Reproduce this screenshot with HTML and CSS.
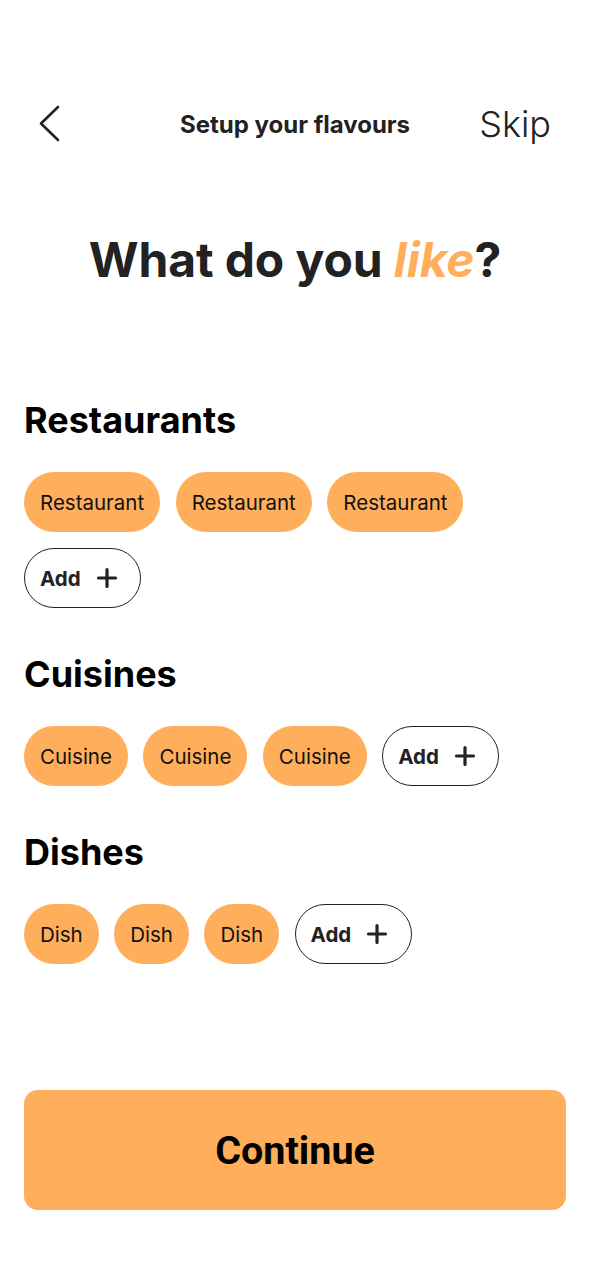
FILE: index.html
```html
<!DOCTYPE html>
<html lang="en">
<head>
<meta charset="utf-8">
<title>Setup your flavours</title>
<link rel="stylesheet" href="styles.css">
</head>
<body>
<div class="screen">
  <header class="topbar">
    <button class="back" aria-label="Back">
      <svg width="24" height="40" viewBox="0 0 24 40"><path d="M20 3 L3 19.5 L20 36" fill="none" stroke="#222" stroke-width="2.6" stroke-linecap="round" stroke-linejoin="round"/></svg>
    </button>
    <div class="title">Setup your flavours</div>
    <button class="skip">Skip</button>
  </header>

  <h1 class="headline">What do you <em>like</em>?</h1>

  <section class="group g-first">
    <h2 class="group-title">Restaurants</h2>
    <div class="chips">
      <span class="chip">Restaurant</span>
      <span class="chip">Restaurant</span>
      <span class="chip">Restaurant</span>
      <button class="add">Add <svg width="24" height="24" viewBox="0 0 24 24"><path d="M12 3.5v17M3.5 12h17" stroke="#222" stroke-width="3.2" stroke-linecap="round"/></svg></button>
    </div>
  </section>

  <section class="group">
    <h2 class="group-title">Cuisines</h2>
    <div class="chips">
      <span class="chip">Cuisine</span>
      <span class="chip">Cuisine</span>
      <span class="chip">Cuisine</span>
      <button class="add">Add <svg width="24" height="24" viewBox="0 0 24 24"><path d="M12 3.5v17M3.5 12h17" stroke="#222" stroke-width="3.2" stroke-linecap="round"/></svg></button>
    </div>
  </section>

  <section class="group">
    <h2 class="group-title">Dishes</h2>
    <div class="chips">
      <span class="chip">Dish</span>
      <span class="chip">Dish</span>
      <span class="chip">Dish</span>
      <button class="add">Add <svg width="24" height="24" viewBox="0 0 24 24"><path d="M12 3.5v17M3.5 12h17" stroke="#222" stroke-width="3.2" stroke-linecap="round"/></svg></button>
    </div>
  </section>

  <button class="continue">Continue</button>
</div>
</body>
</html>
```

FILE: styles.css
```css
* { box-sizing: border-box; }
html, body { margin: 0; padding: 0; background: #fff; }
body { font-family: Inter, "Noto Sans", sans-serif; color: #222; }

.screen {
  width: 590px;
  padding: 94px 24px 0;
  display: flex;
  flex-direction: column;
}

button { font: inherit; color: inherit; background: none; border: 0; padding: 0; cursor: pointer; }

.topbar {
  height: 60px;
  display: grid;
  grid-template-columns: 1fr auto 1fr;
  align-items: center;
}
.back { width: 40px; height: 40px; display: flex; align-items: center; padding-left: 14px; justify-self: start; }
.back svg { display: block; }
.title {
  font-family: Inter, "Liberation Sans", sans-serif;
  font-weight: 700;
  font-size: 24px;
  color: #222;
}
.skip {
  justify-self: end;
  font-family: Inter, sans-serif;
  font-weight: 300;
  font-size: 36px;
  color: #222;
  margin-right: 15px;
}

.headline {
  margin: 77px 0 0;
  text-align: center;
  font-weight: 700;
  font-size: 48px;
  line-height: 58px;
  color: #222;
  letter-spacing: -0.1px;
}
.headline em { color: #FFAE5C; font-style: italic; }

.group { margin-top: 46px; }
.g-first { margin-top: 111px; }

.group-title {
  margin: 0;
  font-size: 36px;
  line-height: 40px;
  font-weight: 700;
  color: #000;
}

.chips {
  margin-top: 32px;
  display: flex;
  flex-wrap: wrap;
  gap: 16px 15.5px;
  max-width: 500px;
}
.g-first .chips { max-width: 460px; }

.chip {
  height: 60px;
  padding: 0 16px;
  border-radius: 30px;
  background: #FFAE5C;
  color: #111;
  font-size: 20.5px;
  display: inline-flex;
  align-items: center;
}

.add {
  height: 60px;
  width: 117px;
  padding: 0 0 0 15px;
  border: 1.5px solid #222;
  border-radius: 30px;
  display: inline-flex;
  align-items: center;
  gap: 14px;
  font-size: 20.5px;
  font-weight: 700;
  color: #222;
}
.add svg { display: block; }

.continue {
  margin-top: 126px;
  height: 120px;
  width: 542px;
  border-radius: 14px;
  background: #FFAE5C;
  font-family: Roboto, "Liberation Sans", sans-serif;
  font-weight: 700;
  font-size: 39.5px;
  color: #000;
}
```
